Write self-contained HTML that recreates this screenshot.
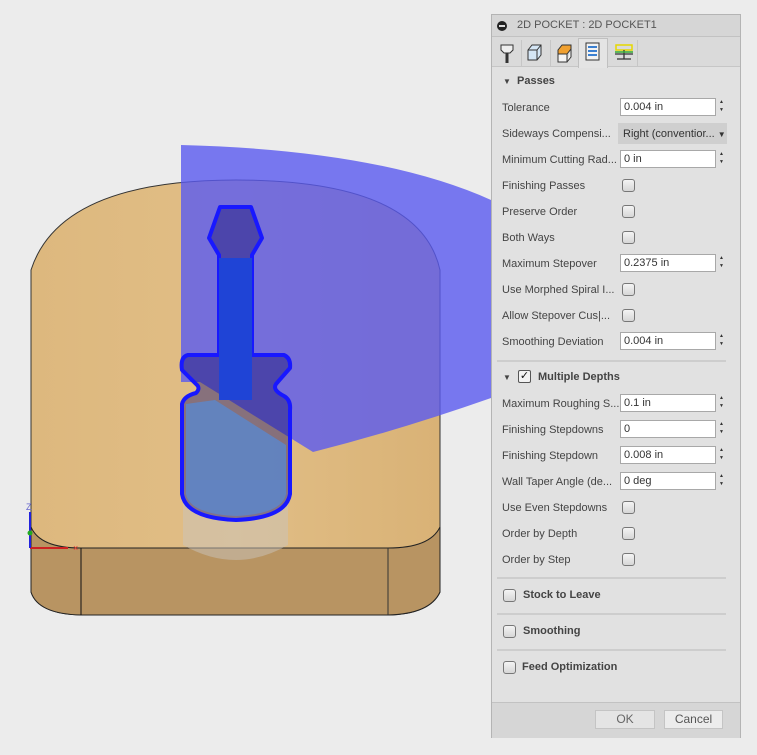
<!DOCTYPE html>
<html><head><meta charset="utf-8"><style>
*{box-sizing:border-box;margin:0;padding:0}
body{width:757px;height:755px;background:#ececec;position:relative;overflow:hidden;font-family:"Liberation Sans",sans-serif;font-size:11px;color:#444}
.p{position:absolute;left:491px;top:14px;width:250px;height:724px;background:#e1e1e1;border:1px solid #b4b4b4}
.a{position:absolute}
.lbl{position:absolute;left:10px;font-size:11px;color:#444;white-space:nowrap}
.in{position:absolute;left:128px;width:96px;height:18px;background:#fff;border:1px solid #a8a8a8;padding-left:3px;font-size:11px;line-height:16px;color:#333}
.sp{position:absolute;left:225px;width:9px;height:18px;font-size:5px;line-height:8px;color:#333;text-align:center}
.cb{position:absolute;left:130px;width:13px;height:13px;border:1px solid #777;border-radius:3px;background:linear-gradient(#f4f4f4,#d6d6d6)}
.sep{position:absolute;left:5px;width:229px;height:2px;background:#cdcdcd}
.hd{position:absolute;font-weight:bold;font-size:11px;color:#444}
</style></head><body>
<svg class="a" style="left:0;top:0" width="491" height="755">
<defs><linearGradient id="w" x1="0" x2="1"><stop offset="0" stop-color="#ddb87e"/><stop offset=".5" stop-color="#e1be86"/><stop offset="1" stop-color="#d9b276"/></linearGradient></defs>
<path d="M31 270 Q60 180 236 180 Q420 180 440 270 L440 592 Q430 614 388 615 L81 615 Q38 614 31 592 Z" fill="url(#w)" stroke="#333" stroke-width="1"/>
<path d="M31 527 Q40 548 81 548 L388 548 Q430 548 440 527 L440 592 Q430 614 388 615 L81 615 Q38 614 31 592 Z" fill="#b89462" stroke="#222" stroke-width="1"/>
<line x1="81" y1="548" x2="81" y2="615" stroke="#111"/><line x1="388" y1="548" x2="388" y2="615" stroke="#333"/>
<path d="M183 480 L183 545 Q236 575 288 545 L288 480 Z" fill="#c9c3bc" opacity=".5"/>
<path d="M181 145 Q380 150 491 200 L491 398 Q400 430 313 452 L200 382 L181 382 Z" fill="#5a5af0" opacity=".8"/>
<path d="M220 207 L251 207 L262 238 L252 255 L252 355 L284 355 Q291 358 290 368 L276 384 Q272 390 284 396 Q291 400 290 410 L290 494 Q286 518 236 520 Q186 518 182 494 L182 404 Q184 396 196 393 Q201 388 196 384 L182 370 Q180 357 188 355 L219 355 L219 255 L209 238 Z" fill="#1a1470" fill-opacity=".45" stroke="#1818ff" stroke-width="4" stroke-linejoin="round"/>
<path d="M186 404 L186 494 Q190 514 236 516 Q282 514 286 494 L286 445 L215 400 Z" fill="#5d86c9" opacity=".85"/>
<rect x="219" y="258" width="33" height="142" fill="#1f44d6"/>
<line x1="30" y1="548" x2="68" y2="548" stroke="#c22" stroke-width="2"/><text x="73" y="551" font-size="9" fill="#e33" font-family="Liberation Sans">×</text>
<line x1="30" y1="548" x2="30" y2="512" stroke="#22d" stroke-width="2"/><text x="26" y="510" font-size="9" fill="#66c" font-family="Liberation Sans">Z</text>
<circle cx="30" cy="533" r="2.5" fill="#2a2"/>
</svg>
<div class="p">
 <div class="a" style="left:0;top:0;width:248px;height:22px;background:#d6d6d6;border-bottom:1px solid #c2c2c2"></div>
 <div class="a" style="left:5px;top:6px;width:10px;height:10px;border-radius:50%;background:#222"></div>
 <div class="a" style="left:7px;top:10px;width:6px;height:2px;background:#ddd"></div>
 <div class="a" style="left:25px;top:4px;color:#555;font-size:11px">2D POCKET : 2D POCKET1</div>
 <div class="a" style="left:0;top:22px;width:248px;height:30px;background:#dadada;border-bottom:1px solid #c6c6c6"></div>
 <div class="a" style="left:29px;top:25px;width:1px;height:26px;background:#c6c6c6"></div>
 <div class="a" style="left:58px;top:25px;width:1px;height:26px;background:#c6c6c6"></div>
 <div class="a" style="left:86px;top:23px;width:30px;height:30px;background:#e4e4e4;border:1px solid #c0c0c0;border-bottom:none"></div>
 <div class="a" style="left:145px;top:25px;width:1px;height:26px;background:#c6c6c6"></div>
 <svg class="a" style="left:0;top:22px" width="150" height="30">
  <path d="M9 8 h12 v5 l-3 3 h-6 l-3 -3z" fill="#eee" stroke="#333"/><path d="M15 16 v10" stroke="#333" stroke-width="3"/>
  <path d="M36 13 l4 -5 h9 v10 l-4 5 h-9z" fill="#d5e6f5" stroke="#333"/><path d="M36 13 h9 v10 M45 13 l4 -5" fill="none" stroke="#333"/>
  <path d="M66 13 l4 -5 h9 v4 l-4 5 h-9z" fill="#f0a030" stroke="#333"/><path d="M66 17 h9 v8 h-9z M75 25 l4 -5 v-8" fill="#f4f4f4" stroke="#333"/>
  <rect x="94" y="6" width="13" height="17" fill="#f2f2f2" stroke="#333"/><path d="M96 10h9M96 14h9M96 18h9" stroke="#3a7fd0" stroke-width="2"/>
  <rect x="124" y="8" width="16" height="5" fill="none" stroke="#e6d800" stroke-width="1.5"/><path d="M123 17 h18 M132 13 v9 M125 22h14" stroke="#333" stroke-width="1.3"/><path d="M123 15h18" stroke="#3a3" stroke-width="1.5"/>
 </svg>
 <div class="a" style="left:11px;top:62px;font-size:8px">▼</div><div class="hd" style="left:25px;top:60px">Passes</div>
 <div class="lbl" style="top:87px">Tolerance</div><div class="in" style="top:83px">0.004 in</div><div class="sp" style="top:83px">▲<br>▼</div>
 <div class="lbl" style="top:113px">Sideways Compensi...</div><div class="a" style="left:126px;top:108px;width:109px;height:21px;background:#cfcfcf;padding:5px 0 0 5px;font-size:11px;color:#333">Right (conventior... <span style="font-size:8px">▼</span></div>
 <div class="lbl" style="top:139px">Minimum Cutting Rad...</div><div class="in" style="top:135px">0 in</div><div class="sp" style="top:135px">▲<br>▼</div>
 <div class="lbl" style="top:165px">Finishing Passes</div><div class="cb" style="top:164px"></div>
 <div class="lbl" style="top:191px">Preserve Order</div><div class="cb" style="top:190px"></div>
 <div class="lbl" style="top:217px">Both Ways</div><div class="cb" style="top:216px"></div>
 <div class="lbl" style="top:243px">Maximum Stepover</div><div class="in" style="top:239px">0.2375 in</div><div class="sp" style="top:239px">▲<br>▼</div>
 <div class="lbl" style="top:269px">Use Morphed Spiral I...</div><div class="cb" style="top:268px"></div>
 <div class="lbl" style="top:295px">Allow Stepover Cus|...</div><div class="cb" style="top:294px"></div>
 <div class="lbl" style="top:321px">Smoothing Deviation</div><div class="in" style="top:317px">0.004 in</div><div class="sp" style="top:317px">▲<br>▼</div>
 <div class="sep" style="top:345px"></div>
 <div class="a" style="left:11px;top:358px;font-size:8px">▼</div><div class="a" style="left:26px;top:355px;width:13px;height:13px;border:1px solid #555;border-radius:2px;background:#f2f2f2;font-size:11px;line-height:11px;text-align:center;color:#111">✓</div><div class="hd" style="left:46px;top:356px">Multiple Depths</div>
 <div class="lbl" style="top:383px">Maximum Roughing S...</div><div class="in" style="top:379px">0.1 in</div><div class="sp" style="top:379px">▲<br>▼</div>
 <div class="lbl" style="top:409px">Finishing Stepdowns</div><div class="in" style="top:405px">0</div><div class="sp" style="top:405px">▲<br>▼</div>
 <div class="lbl" style="top:435px">Finishing Stepdown</div><div class="in" style="top:431px">0.008 in</div><div class="sp" style="top:431px">▲<br>▼</div>
 <div class="lbl" style="top:461px">Wall Taper Angle (de...</div><div class="in" style="top:457px">0 deg</div><div class="sp" style="top:457px">▲<br>▼</div>
 <div class="lbl" style="top:487px">Use Even Stepdowns</div><div class="cb" style="top:486px"></div>
 <div class="lbl" style="top:513px">Order by Depth</div><div class="cb" style="top:512px"></div>
 <div class="lbl" style="top:539px">Order by Step</div><div class="cb" style="top:538px"></div>
 <div class="sep" style="top:562px"></div>
 <div class="cb" style="left:11px;top:574px"></div><div class="hd" style="left:31px;top:574px">Stock to Leave</div>
 <div class="sep" style="top:598px"></div>
 <div class="cb" style="left:11px;top:610px"></div><div class="hd" style="left:31px;top:610px">Smoothing</div>
 <div class="sep" style="top:634px"></div>
 <div class="cb" style="left:11px;top:646px"></div><div class="hd" style="left:30px;top:646px">Feed Optimization</div>
 <div class="a" style="left:0;top:687px;width:248px;height:36px;background:#d6d6d6;border-top:1px solid #c2c2c2"></div>
 <div class="a" style="left:103px;top:695px;width:60px;height:19px;background:#e4e4e4;border:1px solid #c4c4c4;text-align:center;line-height:17px;font-size:12px;color:#666">OK</div>
 <div class="a" style="left:172px;top:695px;width:59px;height:19px;background:#ececec;border:1px solid #c4c4c4;text-align:center;line-height:17px;font-size:12px;color:#555">Cancel</div>
</div>
</body></html>
